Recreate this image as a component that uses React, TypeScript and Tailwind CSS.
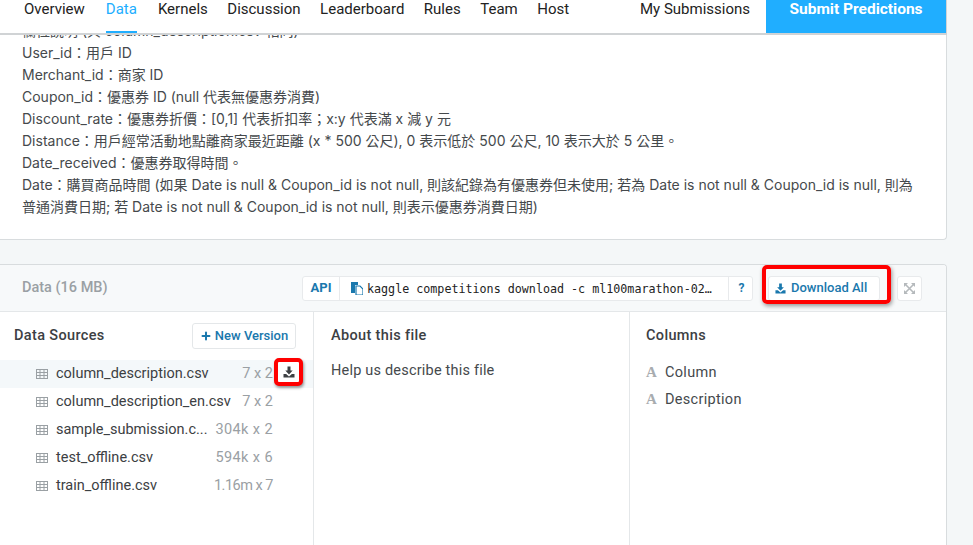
import { Plus } from 'lucide-react';

const sans = 'font-["Roboto","Noto_Sans_CJK_TC",sans-serif]';

const navLeft = ['Overview', 'Data', 'Kernels', 'Discussion', 'Leaderboard', 'Rules', 'Team', 'Host'];

const descLines = [
  '欄位說明 (與 column_description.csv 相同)',
  'User_id：用戶 ID',
  'Merchant_id：商家 ID',
  'Coupon_id：優惠券 ID (null 代表無優惠券消費)',
  'Discount_rate：優惠券折價：[0,1] 代表折扣率；x:y 代表滿 x 減 y 元',
  'Distance：用戶經常活動地點離商家最近距離 (x * 500 公尺), 0 表示低於 500 公尺, 10 表示大於 5 公里。',
  'Date_received：優惠券取得時間。',
  'Date：購買商品時間 (如果 Date is null & Coupon_id is not null, 則該紀錄為有優惠券但未使用; 若為 Date is not null & Coupon_id is null, 則為',
  '普通消費日期; 若 Date is not null & Coupon_id is not null, 則表示優惠券消費日期)',
];

const files = [
  { name: 'column_description.csv', size: '7 x 2', sizeClass: '', active: true },
  { name: 'column_description_en.csv', size: '7 x 2', sizeClass: '' },
  { name: 'sample_submission.c...', size: '304k x 2', sizeClass: 'tracking-[0.4px]' },
  { name: 'test_offline.csv', size: '594k x 6', sizeClass: 'tracking-[0.4px]' },
  { name: 'train_offline.csv', size: '1.16m x 7', sizeClass: 'tracking-[-0.5px]' },
];

function TableIcon() {
  return (
    <svg width="12" height="10" viewBox="0 0 12 10" className="shrink-0">
      <rect x="0.5" y="0.5" width="11" height="9" fill="none" stroke="#9aa0a4" />
      <path d="M0 3.5h12M0 6.5h12M4 0v10M8 0v10" stroke="#9aa0a4" strokeWidth="1" />
    </svg>
  );
}

function DownloadIcon({ color, size = 12 }: { color: string; size?: number }) {
  return (
    <svg width={size} height={size} viewBox="0 0 12 12" className="shrink-0">
      <path d="M4.5 0.5h3v4h2.2L6 8.4 2.3 4.5h2.2z" fill={color} />
      <path d="M0.5 8h2.6L6 10.4 8.9 8h2.6v3.5H0.5z" fill={color} />
    </svg>
  );
}

function Section({ title, children }: { title: string; children: React.ReactNode }) {
  return (
    <div className="pt-[14px]">
      <div className="text-[14.5px] font-medium leading-[20px] tracking-[0.35px] text-[#3c4043]">{title}</div>
      {children}
    </div>
  );
}

export default function App() {
  return (
    <div className={`${sans} h-[545px] w-[973px] overflow-hidden bg-[#f4f7f8] text-[#3c4043]`}>
      <div className="w-[947px]">
        {/* Tabs */}
        <div className="flex h-[35px] items-stretch justify-between border-r border-b-2 border-[#d0d3d5] bg-white">
          <div className="flex gap-[19.5px] pl-6">
            {navLeft.map((t) => (
              <div
                key={t}
                className={`h-[33px] text-[15px] leading-[18px] ${
                  t === 'Data' ? 'mr-[1.5px] border-b-2 border-[#20aeff] text-[#20aeff]' : 'text-[#222]'
                } ${t === 'Overview' ? 'mr-[1.5px]' : ''}`}
              >
                {t}
              </div>
            ))}
          </div>
          <div className="flex">
            <div className="pr-[16px] text-[15px] leading-[18px] text-[#222]">My Submissions</div>
            <div className="flex h-[33px] w-[180px] justify-center bg-[#20aeff] text-[15.5px] font-bold leading-[18px] text-white">
              Submit Predictions
            </div>
          </div>
        </div>

        {/* Description, scrolled under the tabs */}
        <div className="h-[205px] overflow-hidden rounded-br-[4px] border-r border-b border-[#d8dcde] bg-white pl-[22px]">
          <div className="-mt-[15px] font-['Inter','Noto_Sans_CJK_TC',sans-serif] text-[14px] leading-[22px] text-[#45494c]">
            {descLines.map((l) => (
              <div key={l} className="whitespace-nowrap">
                {l}
              </div>
            ))}
          </div>
        </div>

        {/* Data card */}
        <div className="mt-[24px] h-[281px] overflow-hidden rounded-tr-[4px] border-t border-r border-[#d8dcde] bg-white">
          <div className="relative flex h-[47px] items-center border-b border-[#e4e7e9] bg-[#f7f9fa]">
            <div className="w-[302px] pl-[22px] text-[14.5px] font-medium text-[#9aa0a4]">Data (16 MB)</div>
            <div className="flex h-[25px] w-[451px] items-stretch rounded-[3px] border border-[#e8eaec] bg-white">
              <div className="flex w-[37px] items-center justify-center border-r border-[#e8eaec] text-[13px] font-bold text-[#1a78ad]">
                API
              </div>
              <div className="flex min-w-0 flex-1 items-center gap-[4px] border-r border-[#e8eaec] pl-[11px] font-['DejaVu_Sans_Mono',monospace] text-[11.7px] text-[#222]">
                <svg width="12" height="13" viewBox="0 0 12 13" className="shrink-0">
                  <path d="M0 0h7v3h-3v8H0z" fill="#1a78ad" />
                  <path d="M5 4h4l3 3v6H5z" fill="none" stroke="#1a78ad" strokeWidth="1.2" />
                </svg>
                <span className="whitespace-nowrap pt-[3px]">kaggle competitions download -c ml100marathon-02…</span>
              </div>
              <div className="flex w-[23px] items-center justify-center pl-[2px] text-[12px] font-bold text-[#1a78ad]">?</div>
            </div>
            <div className="ml-[15px] flex h-[25px] w-[112px] items-center gap-[5px] rounded-[3px] border border-[#e8eaec] bg-white pl-[6px] text-[13px] font-medium text-[#1a78ad]">
              <DownloadIcon color="#1a78ad" size={11} />
              Download All
            </div>
            <div className="ml-[17px] flex h-[25px] w-[25px] items-center justify-center rounded-[3px] border border-[#e8eaec] bg-white">
              <svg width="11" height="11" viewBox="0 0 11 11">
                <path d="M0 0h4L0 4zM11 0v4L7 0zM0 11V7l4 4zM11 11H7l4-4z" fill="#b5b9bc" />
                <path d="M1.5 1.5l8 8M9.5 1.5l-8 8" stroke="#b5b9bc" strokeWidth="1.6" />
              </svg>
            </div>
            {/* red annotation */}
            <div className="absolute top-0 left-[762px] h-[39px] w-[129px] rounded-[5px] border-[4px] border-[#f00] shadow-[1px_2px_4px_rgba(0,0,0,0.4)]" />
          </div>

          <div className="flex h-[233px]">
            <div className="relative w-[314px] shrink-0 border-r border-[#e4e7e9]">
              <div className="flex h-[48px] items-start justify-between pt-[11px] pr-[17px] pl-[14px]">
                <div className="pt-[3px] text-[14.5px] font-medium leading-[20px] tracking-[0.35px] text-[#3c4043]">Data Sources</div>
                <div className="flex h-[26px] w-[104px] items-center justify-center gap-[3px] rounded-[3px] border border-[#e4e7e9] text-[13px] font-medium text-[#1a78ad]">
                  <Plus size={12} strokeWidth={4} />
                  New Version
                </div>
              </div>
              {files.map((f) => (
                <div
                  key={f.name}
                  className={`flex h-[28px] items-center pl-[36px] text-[14.5px] ${f.active ? 'bg-[#f4f8fa]' : ''}`}
                >
                  <TableIcon />
                  <span className="ml-[8px] whitespace-nowrap text-[#3c4043]">{f.name}</span>
                  <span className={`ml-auto mr-[40px] whitespace-nowrap text-[#9aa0a4] ${f.sizeClass}`}>{f.size}</span>
                </div>
              ))}
              <div className="absolute top-[46px] left-[274px] flex h-[28px] w-[29px] items-center justify-center rounded-[5px] border-[4px] border-[#f00] bg-white shadow-[1px_2px_3px_rgba(0,0,0,0.4)]">
                <DownloadIcon color="#3c4043" />
              </div>
            </div>
            <div className="w-[316px] shrink-0 border-r border-[#e4e7e9] pl-[17px]">
              <Section title="About this file">
                <div className="mt-[15px] text-[14.5px] leading-[20px] tracking-[0.2px] text-[#45494c]">Help us describe this file</div>
              </Section>
            </div>
            <div className="flex-1 pl-[16px]">
              <Section title="Columns">
                <div className="mt-[13px]">
                  {['Column', 'Description'].map((c) => (
                    <div key={c} className="flex h-[27px] items-center text-[14.5px] tracking-[0.3px] text-[#45494c]">
                      <span className="w-[19px] font-['Liberation_Serif',serif] text-[15px] font-bold text-[#a8acaf]">A</span>
                      {c}
                    </div>
                  ))}
                </div>
              </Section>
            </div>
          </div>
        </div>
      </div>
    </div>
  );
}
